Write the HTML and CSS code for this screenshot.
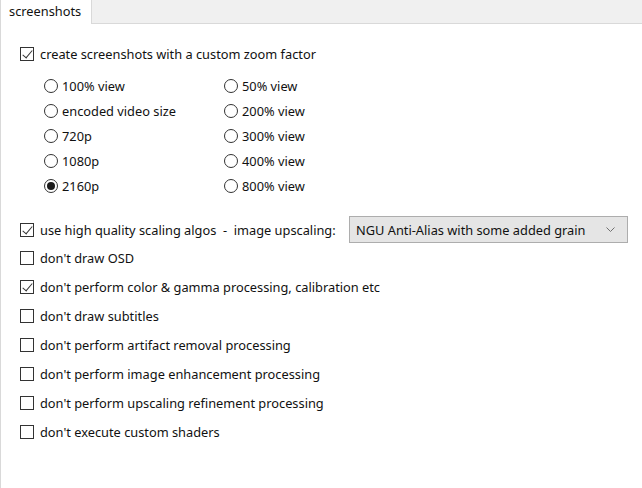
FILE: index.html
```html
<!DOCTYPE html>
<html>
<head>
<meta charset="utf-8">
<link rel="stylesheet" href="styles.css">
</head>
<body>
<div class="window">
  <div class="tabstrip">
    <div class="tab">screenshots</div>
    <div class="tabfill"></div>
  </div>
  <div class="panel">
    <label class="check first"><span class="box checked"></span><span>create screenshots with a custom zoom factor</span></label>
    <div class="radios">
      <div class="rcol">
        <label class="radio"><span class="circle"></span>100% view</label>
        <label class="radio"><span class="circle"></span>encoded video size</label>
        <label class="radio"><span class="circle"></span>720p</label>
        <label class="radio"><span class="circle"></span>1080p</label>
        <label class="radio"><span class="circle on"></span>2160p</label>
      </div>
      <div class="rcol">
        <label class="radio"><span class="circle"></span>50% view</label>
        <label class="radio"><span class="circle"></span>200% view</label>
        <label class="radio"><span class="circle"></span>300% view</label>
        <label class="radio"><span class="circle"></span>400% view</label>
        <label class="radio"><span class="circle"></span>800% view</label>
      </div>
    </div>
    <div class="scalerow">
      <label class="check"><span class="box checked"></span><span>use high quality scaling algos&nbsp; -&nbsp; image upscaling:</span></label>
      <div class="select"><span>NGU Anti-Alias with some added grain</span><svg width="9" height="5" viewBox="0 0 9 5"><path d="M0.5 0.5 L4.5 4.5 L8.5 0.5" fill="none" stroke="#707070" stroke-width="1"/></svg></div>
    </div>
    <div class="checks">
      <label class="check"><span class="box"></span><span>don't draw OSD</span></label>
      <label class="check"><span class="box checked"></span><span>don't perform color &amp; gamma processing, calibration etc</span></label>
      <label class="check"><span class="box"></span><span>don't draw subtitles</span></label>
      <label class="check"><span class="box"></span><span>don't perform artifact removal processing</span></label>
      <label class="check"><span class="box"></span><span>don't perform image enhancement processing</span></label>
      <label class="check"><span class="box"></span><span>don't perform upscaling refinement processing</span></label>
      <label class="check"><span class="box"></span><span>don't execute custom shaders</span></label>
    </div>
  </div>
</div>
</body>
</html>
```
FILE: styles.css
```css
* { box-sizing: border-box; }
html, body { margin: 0; padding: 0; background: #fff; }
body {
  font-family: "Noto Sans", "DejaVu Sans", sans-serif;
  font-size: 12.8px;
  color: #111;
}
.window { width: 642px; height: 488px; display: flex; flex-direction: column; overflow: hidden; }
.tabstrip { display: flex; height: 24px; }
.tab {
  width: 92px; height: 24px;
  border-left: 1px solid #d9d9d9;
  border-right: 1px solid #d9d9d9;
  background: #fff;
  padding: 4px 0 0 8px;
  line-height: 15px;
}
.tabfill { flex: 1; background: #f0f0f0; border-bottom: 1px solid #d9d9d9; }
.panel {
  flex: 1;
  border-left: 1px solid #d9d9d9;
  padding: 23px 0 0 19px;
  display: flex; flex-direction: column;
}
.check { display: flex; align-items: center; height: 14px; line-height: 14px; }
.box {
  width: 14px; height: 14px;
  border: 1px solid #333;
  background: #fff;
  margin-right: 6px;
  flex: none;
  position: relative;
}
.box.checked::after {
  content: "";
  position: absolute;
  left: 4px; top: 0px;
  width: 4px; height: 9px;
  border-right: 1.2px solid #333;
  border-bottom: 1.2px solid #333;
  transform: rotate(40deg);
}
.radios { display: flex; padding: 18px 0 0 24px; }
.rcol { display: flex; flex-direction: column; gap: 11px; }
.rcol:first-child { width: 180px; }
.radio { display: flex; align-items: center; height: 14px; line-height: 14px; }
.circle {
  width: 14px; height: 14px; border-radius: 50%;
  border: 1px solid #333; background: #fff;
  margin-right: 4px; flex: none;
  display: flex; align-items: center; justify-content: center;
}
.circle.on::after { content: ""; width: 8px; height: 8px; border-radius: 50%; background: #1a1a1a; }
.scalerow { display: flex; align-items: center; margin-top: 23px; }
.select {
  margin-left: auto; margin-right: 14px;
  width: 279px; height: 27px;
  background: #e5e5e5; border: 1px solid #adadad;
  display: flex; align-items: center; justify-content: space-between;
  padding: 0 12px 0 6px;
}
.checks { display: flex; flex-direction: column; gap: 15px; margin-top: 8px; }
```
